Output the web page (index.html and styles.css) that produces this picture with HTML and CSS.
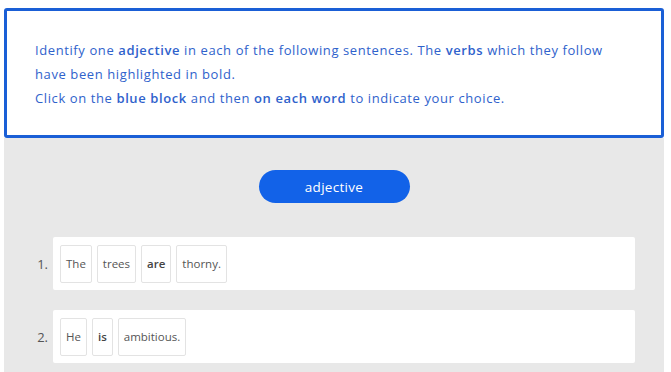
FILE: index.html
```html
<!DOCTYPE html>
<html lang="en">
<head>
    <meta charset="UTF-8">
    <meta name="viewport" content="width=device-width, initial-scale=1.0">
    <title>Identify the adjective</title>
    <link rel="stylesheet" href="styles.css">
</head>
<body>
    <div class="exercise">
        <!-- Instructions -->
        <div class="instructions">
            <p>Identify one <b>adjective</b> in each of the following sentences. The <b>verbs</b> which they follow have been highlighted in bold.</p>
            <p>Click on the <b>blue block</b> and then <b>on each word</b> to indicate your choice.</p>
        </div>

        <!-- Workspace -->
        <div class="workspace">
            <div class="toolbar">
                <button class="block">adjective</button>
            </div>

            <div class="question">
                <span class="num">1.</span>
                <div class="sentence">
                    <span class="word">The</span>
                    <span class="word">trees</span>
                    <span class="word verb">are</span>
                    <span class="word">thorny.</span>
                </div>
            </div>

            <div class="question">
                <span class="num">2.</span>
                <div class="sentence">
                    <span class="word">He</span>
                    <span class="word verb">is</span>
                    <span class="word">ambitious.</span>
                </div>
            </div>
        </div>
    </div>
</body>
</html>
```

FILE: styles.css
```css
body {
    margin: 0;
    padding: 0;
    background-color: #fff;
    font-family: "Open Sans", sans-serif;
    color: #555;
}
.exercise {
    margin: 8px 7px 0 4px;
}
.instructions {
    border: 3px solid #1a5fd6;
    border-radius: 3px;
    padding: 27px 55px 25px 28px;
    color: #2f62cc;
    font-size: 13px;
    line-height: 24px;
    letter-spacing: 0.6px;
}
.instructions p {
    margin: 0;
}
.instructions b {
    font-weight: 600;
}
.workspace {
    background-color: #e8e8e8;
    padding: 32px 0 10px;
}
.toolbar {
    display: flex;
    justify-content: center;
    margin-bottom: 34px;
}
.block {
    width: 151px;
    height: 33px;
    border: none;
    border-radius: 17px;
    background-color: #1262e8;
    color: #fff;
    font-family: inherit;
    font-size: 13.5px;
    letter-spacing: 0.3px;
    cursor: pointer;
}
.question {
    display: flex;
    align-items: center;
    margin: 0 29px 20px 0;
}
.num {
    width: 44px;
    padding-right: 5px;
    text-align: right;
    font-size: 13px;
    color: #555;
}
.sentence {
    flex: 1;
    display: flex;
    flex-wrap: wrap;
    gap: 5px;
    background-color: #fff;
    border-radius: 2px;
    padding: 8px 7px 7px;
}
.word {
    height: 36px;
    line-height: 36px;
    padding: 0 5px;
    border: 1px solid #e3e3e3;
    border-radius: 2px;
    font-size: 11.5px;
    color: #555;
    cursor: pointer;
}
.verb {
    font-weight: 600;
    color: #444;
}
```
